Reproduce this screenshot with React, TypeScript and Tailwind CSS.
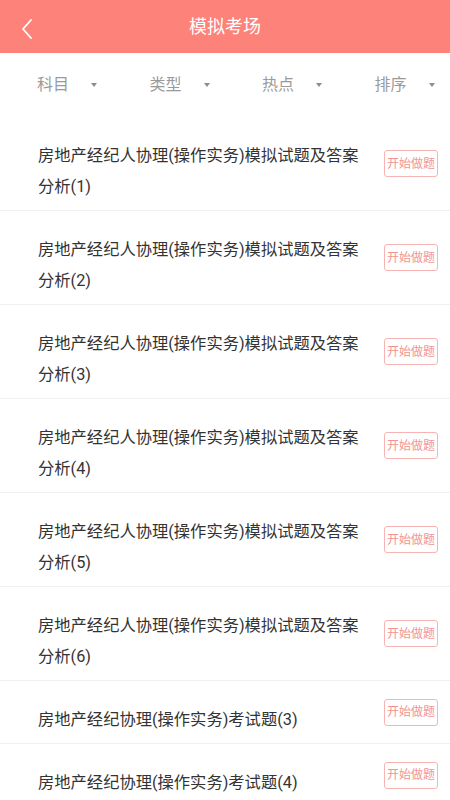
const items = [
  { title: '房地产经纪人协理(操作实务)模拟试题及答案分析(1)' },
  { title: '房地产经纪人协理(操作实务)模拟试题及答案分析(2)' },
  { title: '房地产经纪人协理(操作实务)模拟试题及答案分析(3)' },
  { title: '房地产经纪人协理(操作实务)模拟试题及答案分析(4)' },
  { title: '房地产经纪人协理(操作实务)模拟试题及答案分析(5)' },
  { title: '房地产经纪人协理(操作实务)模拟试题及答案分析(6)' },
  { title: '房地产经纪协理(操作实务)考试题(3)' },
  { title: '房地产经纪协理(操作实务)考试题(4)' },
]

const filters = ['科目', '类型', '热点', '排序']

export default function App() {
  return (
    <div
      className="w-[450px] h-[800px] overflow-hidden bg-white"
      style={{ fontFamily: 'Roboto, "Noto Sans CJK SC", sans-serif' }}
    >
      {/* header */}
      <div className="h-[53px] bg-[#fd8279] flex items-center relative">
        <svg
          className="absolute left-[20px] top-[18px]"
          width="14"
          height="22"
          viewBox="0 0 14 22"
          fill="none"
        >
          <path d="M11 2 L3 11 L11 20" stroke="white" strokeWidth="1.8" strokeLinecap="round" strokeLinejoin="round" />
        </svg>
        <div className="flex-1 text-center text-white text-[18px]">模拟考场</div>
      </div>

      {/* filters */}
      <div className="h-[64px] grid grid-cols-4 items-center">
        {filters.map((f) => (
          <div key={f} className="flex items-center pl-[37px] gap-[22px]">
            <span className="text-[16px] text-[#9a9a9a]">{f}</span>
            <span className="w-0 h-0 border-l-[3px] border-r-[3px] border-t-[4px] border-l-transparent border-r-transparent border-t-[#8c8c8c]" />
          </div>
        ))}
      </div>

      {/* list */}
      <div>
        {items.map((it, i) => (
          <div
            key={i}
            className="flex items-center justify-between border-b border-[#f1f1f1] pl-[38px] pr-[12px]"
          >
            <div className="w-[328px] pt-[23px] pb-[8px] text-[16.3px] leading-[31px] text-[#333333]">
              {it.title}
            </div>
            <div className="border border-[#f8b4b2] rounded-[3px] h-[27px] px-[2px] flex items-center text-[12px] text-[#f49491]">
              开始做题
            </div>
          </div>
        ))}
      </div>
    </div>
  )
}
